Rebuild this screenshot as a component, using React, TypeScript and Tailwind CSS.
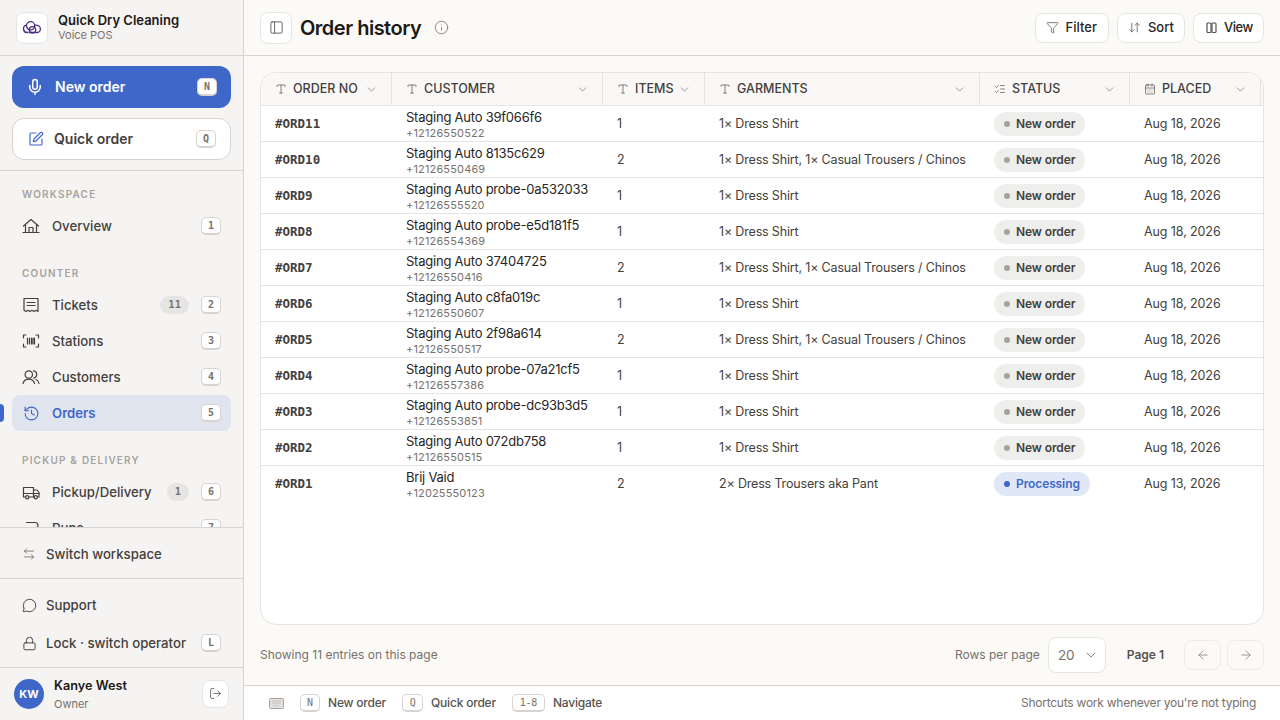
import React from "react";
import { Mic, SquarePen, History, ArrowLeftRight, MessageCircle, Lock, LogOut, PanelLeft, Info, Funnel, ArrowDownUp, Type, ListChecks, CalendarDays, ChevronDown, ArrowLeft, ArrowRight } from "lucide-react";

const mono = "font-['DejaVu_Sans_Mono',monospace]";

function Ico({ children, w = 18, h = 18, className = "" }: { children: React.ReactNode; w?: number; h?: number; className?: string }) {
  return (
    <svg width={w} height={h} viewBox={`0 0 ${w} ${h}`} fill="none" stroke="currentColor" strokeWidth="1.2" strokeLinecap="round" strokeLinejoin="round" className={`shrink-0 ${className}`}>
      {children}
    </svg>
  );
}

const HomeIco = () => (
  <Ico>
    <path d="M1.5 9 9 2.5 16.5 9" />
    <path d="M3.5 7.5v8h11v-8" />
    <path d="M7 15.5v-5h4v5" />
    <path d="M1 15.5h16" />
  </Ico>
);
const TicketIco = () => (
  <Ico>
    <path d="M2 2.5h14v13l-2-1.2-2 1.2-2-1.2-2 1.2-2-1.2-2 1.2-2-1.2z" />
    <path d="M5 6.5h8M5 9.5h8" />
  </Ico>
);
const BarcodeIco = () => (
  <Ico>
    <path d="M4 3H1.5v3M14 3h2.5v3M4 15H1.5v-3M14 15h2.5v-3" />
    <path d="M5.5 6v6M7.5 6v6M9.5 6v6M11 6v6M12.5 6v6" />
  </Ico>
);
const UsersIco = () => (
  <Ico>
    <circle cx="6.8" cy="6.5" r="3.7" />
    <path d="M1 15.5c.7-2.8 2.9-4.4 5.8-4.4s5 1.6 5.8 4.4" />
    <path d="M11.3 2.9c2 .2 3.4 1.7 3.4 3.6 0 1.8-1.2 3.2-3 3.6" />
    <path d="M14 11.5c1.6.7 2.6 2 3 4" />
  </Ico>
);
const TruckIco = () => (
  <Ico>
    <path d="M3.5 14H1.5V4.5h10V14H7" />
    <path d="M11.5 7H15l2 2.5V14h-1.5M11.5 14H12" />
    <path d="M1.5 10.5h15.5" />
    <circle cx="5.2" cy="14.3" r="1.6" />
    <circle cx="13.8" cy="14.3" r="1.6" />
  </Ico>
);
const RouteIco = () => (
  <Ico>
    <path d="M4.5 3.5h8.5a3 3 0 0 1 0 6H5a3 3 0 0 0 0 6h8" />
  </Ico>
);
const ColsIco = () => (
  <Ico w={13} h={13} className="text-[#57534e]">
    <rect x="2" y="2" width="4" height="9.5" rx="1" />
    <rect x="7" y="2" width="4" height="9.5" rx="1" />
  </Ico>
);
const KeyboardIco = () => (
  <svg width="15" height="11" viewBox="0 0 15 11" className="shrink-0">
    <rect x=".5" y=".5" width="14" height="10" rx="1" fill="#e3e1df" stroke="#a8a29e" />
    <path d="M3 3h9M3 5h9M5 7.5h5" stroke="#c7c4c1" strokeWidth="1" />
  </svg>
);

function Kbd({ children, className = "" }: { children: React.ReactNode; className?: string }) {
  return (
    <span className={`${mono} flex h-[18px] min-w-5 items-center justify-center rounded-[5px] border border-b-2 border-[#d6d3d1] bg-white px-1 text-[10px] font-bold text-[#78716c] ${className}`}>
      {children}
    </span>
  );
}

function NavItem({ icon, label, k, badge, active }: { icon: React.ReactNode; label: string; k: string; badge?: string; active?: boolean }) {
  return (
    <div className="relative">
      {active && <div className="absolute -left-3 top-[9px] h-[18px] w-1 rounded-r-sm bg-[#3f67c9]" />}
      <div className={`flex h-9 items-center rounded-lg pl-[10px] pr-[10px] ${active ? "bg-[#e0e4ef] text-[#3f67c9]" : "text-[#44403c]"}`}>
        <span className="flex w-[18px] shrink-0 justify-center">{icon}</span>
        <span className={`ml-3 flex-1 whitespace-nowrap pt-[2px] text-[13.2px] ${active ? "font-semibold" : "font-medium"}`}>{label}</span>
        {badge && <span className={`${mono} mr-[12px] flex h-[18px] items-center rounded-full bg-[#e7e5e4] px-2 text-[10.5px] font-bold text-[#78716c]`}>{badge}</span>}
        <Kbd>{k}</Kbd>
      </div>
    </div>
  );
}

function Section({ title }: { title: string }) {
  return <div className="px-[10px] pb-[6px] text-[10px] font-semibold tracking-[0.12em] text-[#a8a29e]">{title}</div>;
}

function Sidebar() {
  return (
    <aside className="flex h-full w-[244px] shrink-0 flex-col border-r border-[#d6d3d1] bg-[#f5f4f2]">
      <div className="flex h-[56px] shrink-0 items-center gap-[10px] border-b border-[#d6d3d1] px-4">
        <div className="flex h-8 w-8 items-center justify-center rounded-lg border border-[#e7e5e4] bg-white">
          <svg width="20" height="16" viewBox="0 0 20 16" fill="none" stroke="#4c2a85" strokeWidth="1.3">
            <path d="M6.5 12.5H5a3.7 3.7 0 0 1-.6-7.3" />
            <circle cx="8.6" cy="5.8" r="4.1" />
            <path d="M12.6 5.2c3-.6 5.8 1 5.8 3.7 0 2-1.6 3.6-3.6 3.6H7" />
            <circle cx="10.5" cy="9.8" r="3.2" />
          </svg>
        </div>
        <div className="min-w-0 pb-[2px]">
          <div className="text-[13px] font-semibold leading-4 text-[#1c1917]">Quick Dry Cleaning</div>
          <div className="text-[11px] leading-[14px] text-[#78716c]">Voice POS</div>
        </div>
      </div>
      <div className="flex shrink-0 flex-col gap-[10px] border-b border-[#d6d3d1] px-3 pb-[10px] pt-[10px]">
        <div className="flex h-[42px] items-center rounded-xl bg-[#3f67c9] pl-[14px] pr-[14px] text-white">
          <Mic size={18} strokeWidth={2} />
          <span className="ml-[11px] flex-1 pb-[2px] text-[14px] font-semibold">New order</span>
          <Kbd>N</Kbd>
        </div>
        <div className="flex h-[42px] items-center rounded-xl border border-[#d6d3d1] bg-white pl-[15px] pr-[14px] text-[#44403c]">
          <SquarePen size={16} strokeWidth={1.75} className="text-[#3f67c9]" />
          <span className="ml-[10px] flex-1 pb-[2px] text-[14px] font-semibold">Quick order</span>
          <Kbd>Q</Kbd>
        </div>
      </div>
      <div className="min-h-0 flex-1 overflow-hidden px-3 pt-4">
        <Section title="WORKSPACE" />
        <NavItem icon={<HomeIco />} label="Overview" k="1" />
        <div className="h-[22px]" />
        <Section title="COUNTER" />
        <NavItem icon={<TicketIco />} label="Tickets" k="2" badge="11" />
        <NavItem icon={<BarcodeIco />} label="Stations" k="3" />
        <NavItem icon={<UsersIco />} label="Customers" k="4" />
        <NavItem icon={<History size={17} strokeWidth={1.5} />} label="Orders" k="5" active />
        <div className="h-[22px]" />
        <Section title="PICKUP & DELIVERY" />
        <NavItem icon={<TruckIco />} label="Pickup/Delivery" k="6" badge="1" />
        <NavItem icon={<RouteIco />} label="Runs" k="7" />
      </div>
      <div className="shrink-0 border-t border-[#d6d3d1] px-3 pb-[7px] pt-[9px]">
        <div className="flex h-[34px] items-center gap-[10px] px-[10px] text-[13.2px] font-medium text-[#44403c]">
          <ArrowLeftRight size={14} strokeWidth={1.5} className="text-[#78716c]" />
          <span className="pt-[2px]">Switch workspace</span>
        </div>
      </div>
      <div className="shrink-0 border-t border-[#d6d3d1] px-3 pb-[5px] pt-[7px]">
        <div className="flex h-[38px] items-center gap-[9px] px-[10px] text-[13.2px] font-medium text-[#44403c]">
          <MessageCircle size={15} strokeWidth={1.5} />
          <span className="pt-[2px]">Support</span>
        </div>
        <div className="flex h-[38px] items-center gap-[9px] px-[10px] text-[13.2px] font-medium text-[#44403c]">
          <Lock size={15} strokeWidth={1.5} />
          <span className="flex-1 pt-[2px]">Lock · switch operator</span>
          <Kbd>L</Kbd>
        </div>
      </div>
      <div className="flex h-[53px] shrink-0 items-center border-t border-[#d6d3d1] px-[14px]">
        <div className="flex h-[30px] w-[30px] items-center justify-center rounded-full bg-[#3f67c9] text-[11px] font-bold text-white">KW</div>
        <div className="ml-[10px] flex-1">
          <div className="pt-px text-[12.7px] font-semibold leading-4 text-[#1c1917]">Kanye West</div>
          <div className="mt-[3px] text-[11px] leading-[14px] text-[#78716c]">Owner</div>
        </div>
        <div className="-mt-px flex h-[28px] w-[27px] items-center justify-center rounded-lg border border-[#e7e5e4] bg-white text-[#57534e]">
          <LogOut size={13} strokeWidth={1.5} />
        </div>
      </div>
    </aside>
  );
}

function HBtn({ icon, label, className = "" }: { icon: React.ReactNode; label: string; className?: string }) {
  return (
    <div className={`flex h-[30px] items-center rounded-lg border border-[#e7e5e4] bg-white text-[13px] font-medium text-[#292524] ${className}`}>
      {icon}
      {label}
    </div>
  );
}

const cols = "grid grid-cols-[131px_211px_102px_275px_150px_131px]";

function Th({ icon: Icon, label }: { icon: any; label: string }) {
  return (
    <div className="flex h-full items-center border-r border-[#e7e5e4] pl-[14px] pr-[13px] text-[#44403c]">
      <Icon size={12} strokeWidth={1.4} className="shrink-0 text-[#57534e]" />
      <span className="ml-[6px] flex-1 whitespace-nowrap text-[12.5px] font-medium">{label}</span>
      <ChevronDown size={13} strokeWidth={1.3} className="text-[#78716c]" />
    </div>
  );
}

const rows = [
  ["#ORD11", "Staging Auto 39f066f6", "+12126550522", "1", "1× Dress Shirt"],
  ["#ORD10", "Staging Auto 8135c629", "+12126550469", "2", "1× Dress Shirt, 1× Casual Trousers / Chinos"],
  ["#ORD9", "Staging Auto probe-0a532033", "+12126555520", "1", "1× Dress Shirt"],
  ["#ORD8", "Staging Auto probe-e5d181f5", "+12126554369", "1", "1× Dress Shirt"],
  ["#ORD7", "Staging Auto 37404725", "+12126550416", "2", "1× Dress Shirt, 1× Casual Trousers / Chinos"],
  ["#ORD6", "Staging Auto c8fa019c", "+12126550607", "1", "1× Dress Shirt"],
  ["#ORD5", "Staging Auto 2f98a614", "+12126550517", "2", "1× Dress Shirt, 1× Casual Trousers / Chinos"],
  ["#ORD4", "Staging Auto probe-07a21cf5", "+12126557386", "1", "1× Dress Shirt"],
  ["#ORD3", "Staging Auto probe-dc93b3d5", "+12126553851", "1", "1× Dress Shirt"],
  ["#ORD2", "Staging Auto 072db758", "+12126550515", "1", "1× Dress Shirt"],
  ["#ORD1", "Brij Vaid", "+12025550123", "2", "2× Dress Trousers aka Pant"],
];

function Table() {
  return (
    <div className="min-h-0 flex-1 overflow-hidden rounded-2xl border border-[#e7e5e4] bg-white">
      <div className="flex h-[33px] border-b border-[#e7e5e4] bg-[#f9f8f6]">
        <div className={`${cols} h-full`}>
          <Th icon={Type} label="ORDER NO" />
          <Th icon={Type} label="CUSTOMER" />
          <Th icon={Type} label="ITEMS" />
          <Th icon={Type} label="GARMENTS" />
          <Th icon={ListChecks} label="STATUS" />
          <Th icon={CalendarDays} label="PLACED" />
        </div>
      </div>
      {rows.map((r, i) => {
        const last = i === rows.length - 1;
        return (
          <div key={r[0]} className={`${cols} h-9 items-center border-b ${last ? "border-transparent" : "border-[#e7e5e4]"}`}>
            <div className={`${mono} pl-[14px] pt-[2px] text-[12.5px] font-bold text-[#44403c]`}>{r[0]}</div>
            <div className="pl-[14px] pt-[2px]">
              <div className="whitespace-nowrap text-[13px] leading-[16px] tracking-[-0.23px] text-[#292524]">{r[1]}</div>
              <div className="mt-px text-[11px] leading-[14px] tracking-[0.15px] text-[#78716c]">{r[2]}</div>
            </div>
            <div className="pl-[14px] pt-[2px] text-[12.5px] text-[#44403c]">{r[3]}</div>
            <div className="whitespace-nowrap pl-[14px] pt-[2px] text-[12.5px] tracking-[-0.17px] text-[#44403c]">{r[4]}</div>
            <div className="flex pl-[14px]">
              <span className={`flex h-6 items-center gap-[6px] rounded-full pl-[10px] pr-[10px] text-[12px] font-semibold tracking-[-0.1px] ${last ? "bg-[#e0e7f7] text-[#3f67c9]" : "bg-[#eeeeed] text-[#44403c]"}`}>
                <span className={`h-[6px] w-[6px] rounded-full ${last ? "bg-[#3f67c9]" : "bg-[#a8a29e]"}`} />
                {last ? "Processing" : "New order"}
              </span>
            </div>
            <div className="pl-[14px] pt-[2px] text-[12.5px] tracking-[-0.1px] text-[#44403c]">{last ? "Aug 13, 2026" : "Aug 18, 2026"}</div>
          </div>
        );
      })}
    </div>
  );
}

export default function App() {
  return (
    <div className="flex h-[720px] w-[1280px] overflow-hidden bg-[#fbfaf7] font-['Inter',sans-serif]">
      <Sidebar />
      <main className="flex min-w-0 flex-1 flex-col">
        <header className="flex h-[56px] shrink-0 items-center border-b border-[#d6d3d1] pl-4 pr-4">
          <div className="flex h-8 w-8 items-center justify-center rounded-lg border border-[#e7e5e4] bg-white text-[#57534e]">
            <PanelLeft size={15} strokeWidth={1.4} />
          </div>
          <h1 className="ml-2 text-[20px] font-semibold tracking-[-0.5px] text-[#1c1917]">Order history</h1>
          <Info size={15} strokeWidth={1.3} className="ml-[13px] text-[#78716c]" />
          <div className="ml-auto flex items-center gap-2">
            <HBtn className="gap-[7px] pl-[10px] pr-[11px]" icon={<Funnel size={13} strokeWidth={1.4} className="text-[#57534e]" />} label="Filter" />
            <HBtn className="gap-[7px] pl-[10px] pr-[10px]" icon={<ArrowDownUp size={13} strokeWidth={1.4} className="text-[#57534e]" />} label="Sort" />
            <HBtn className="gap-[6px] pl-[11px] pr-[10px] tracking-[-0.4px]" icon={<ColsIco />} label="View" />
          </div>
        </header>
        <div className="flex min-h-0 flex-1 flex-col px-4 pt-4">
          <Table />
          <div className="flex h-[60px] shrink-0 items-center text-[12px] text-[#78716c]">
            <span>Showing 11 entries on this page</span>
            <span className="ml-auto">Rows per page</span>
            <div className="ml-2 flex h-9 w-[58px] items-center justify-center gap-2 rounded-lg border border-[#e7e5e4] bg-white pl-[3px] text-[13.5px]">
              20 <ChevronDown size={16} strokeWidth={1.3} />
            </div>
            <span className="ml-[21px] font-semibold text-[#57534e]">Page 1</span>
            <div className="ml-5 flex h-[30px] w-[37px] items-center justify-center rounded-lg border border-[#eeecea] text-[#78716c]">
              <ArrowLeft size={14} strokeWidth={1.2} />
            </div>
            <div className="ml-[6px] flex h-[30px] w-[37px] items-center justify-center rounded-lg border border-[#eeecea] text-[#78716c]">
              <ArrowRight size={14} strokeWidth={1.2} />
            </div>
          </div>
        </div>
        <footer className="flex h-[35px] shrink-0 items-center border-t border-[#d6d3d1] bg-white pl-[25px] pr-6 text-[12px] font-medium tracking-[-0.2px] text-[#57534e]">
          <KeyboardIco />
          <Kbd className="ml-4 font-normal">N</Kbd>
          <span className="ml-2">New order</span>
          <Kbd className="ml-4 w-[21px] font-normal">Q</Kbd>
          <span className="ml-2">Quick order</span>
          <Kbd className="ml-4 w-[33px] font-normal">1-8</Kbd>
          <span className="ml-2">Navigate</span>
          <span className="ml-auto font-normal tracking-[-0.24px] text-[#78716c]">Shortcuts work whenever you're not typing</span>
        </footer>
      </main>
    </div>
  );
}
